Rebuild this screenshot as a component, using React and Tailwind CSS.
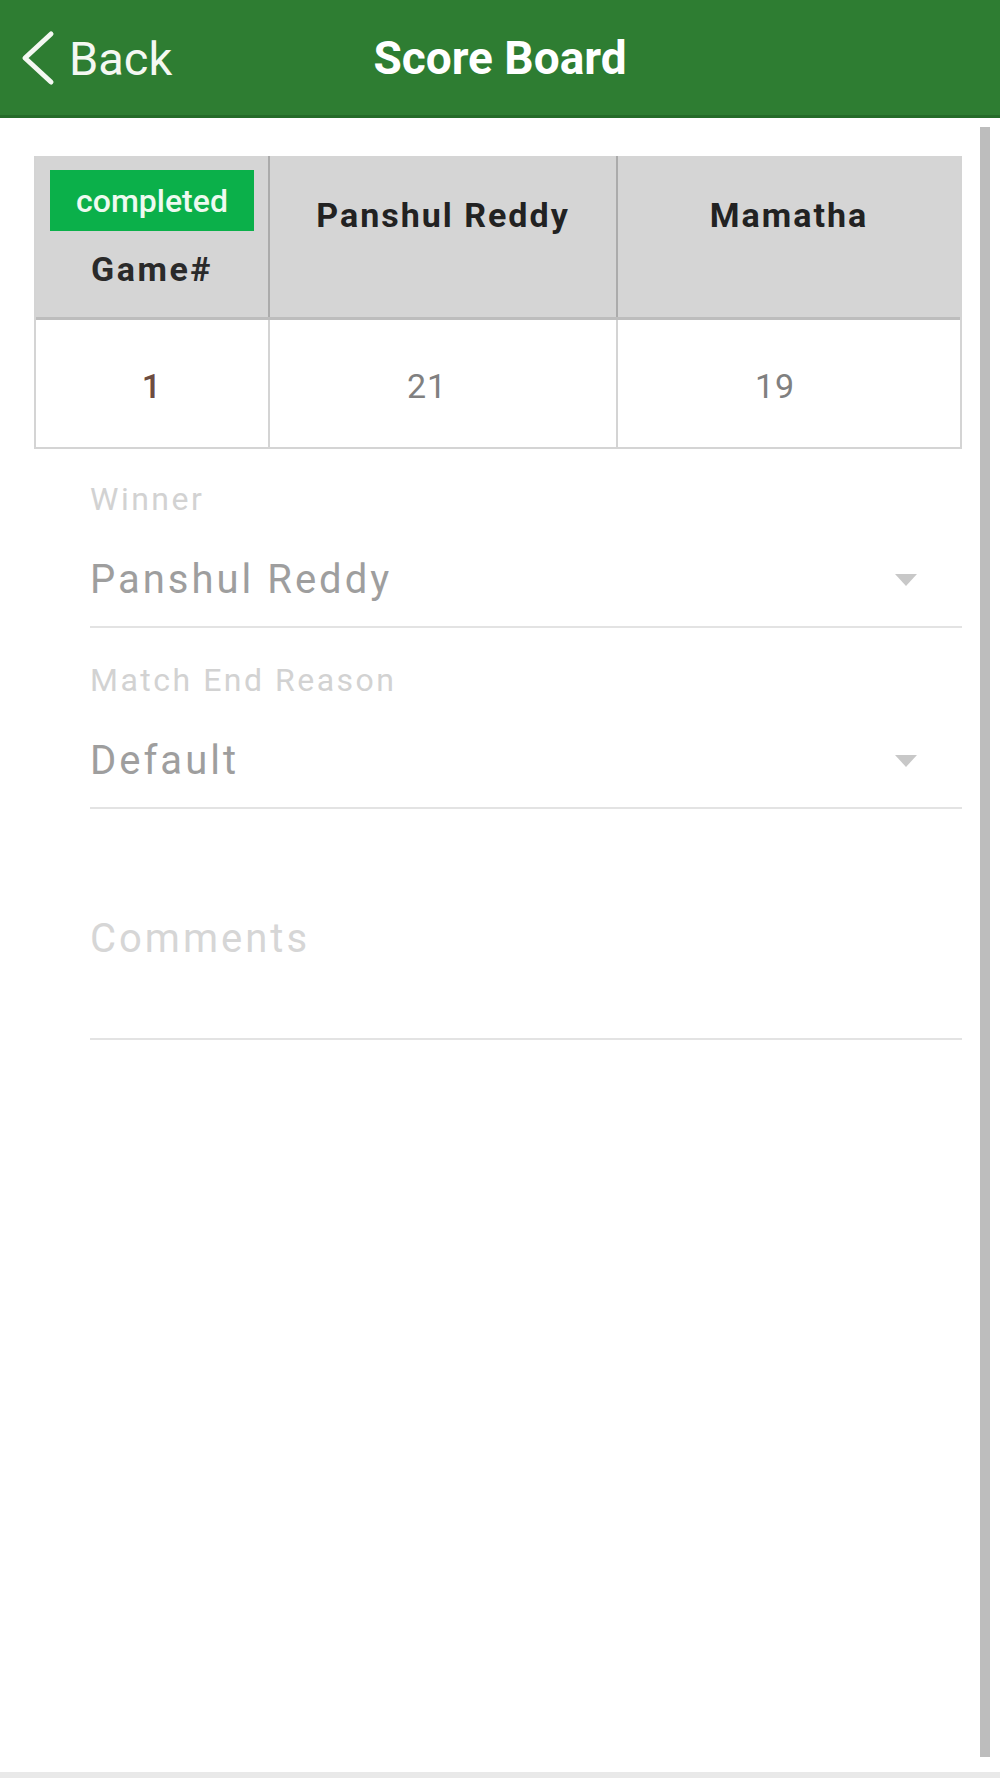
import React from 'react';

const Chevron = () => (
    <svg width="34" height="58" viewBox="0 0 34 58" className="shrink-0">
        <polyline points="30,4 4,28 30,52" fill="none" stroke="#f4f8f2" strokeWidth="5" strokeLinecap="round" strokeLinejoin="round" />
    </svg>
);

const Caret = () => (
    <svg width="22" height="12" viewBox="0 0 22 12" className="shrink-0">
        <polygon points="0,0 22,0 11,12" fill="#c8c8c8" />
    </svg>
);

const SelectField = ({ label, value, className }) => (
    <div className={className}>
        <div className="text-[32px] leading-[36px] text-[#d2d2d2] tracking-[2.5px]">{label}</div>
        <div className="flex items-center justify-between mt-[39px] pb-[22px] border-b-2 border-[#e3e3e3] pr-[45px]">
            <span className="text-[40px] leading-[48px] text-[#9e9e9e] tracking-[3px]">{value}</span>
            <Caret />
        </div>
    </div>
);

const App = () => {
    return (
        <div className="w-[1000px] h-[1778px] flex flex-col bg-white" style={{ fontFamily: 'Roboto, "Liberation Sans", sans-serif' }}>
            <header className="h-[118px] shrink-0 bg-[#2e7d32] border-b-[3px] border-[#256b29] grid grid-cols-[1fr_auto_1fr] items-center">
                <div className="flex items-center gap-[14px] pl-[21px] pt-[2px]">
                    <Chevron />
                    <span className="text-[47px] leading-none text-[#f4f8f2]">Back</span>
                </div>
                <h1 className="text-[46px] font-bold leading-none text-white">Score Board</h1>
                <div />
            </header>

            <div className="flex-1 flex pl-[34px] pr-[10px]">
                <div className="flex-1 pt-[38px]">
                    <div className="border-x-2 border-b-2 border-[#d4d4d4]">
                        <div className="grid grid-cols-[234px_348px_1fr] h-[164px] bg-[#d5d5d5] border-b-[3px] border-[#bdbdbd]">
                            <div className="flex flex-col items-center px-[14px] pt-[14px] border-r-2 border-[#ababab]">
                                <div className="w-full h-[61px] bg-[#0bb04a] flex items-center justify-center text-[32px] font-medium text-[#eefaf0]">completed</div>
                                <div className="mt-[18px] text-[34px] leading-[40px] font-bold text-[#2a2a2a] tracking-[2.5px]">Game#</div>
                            </div>
                            <div className="pt-[39px] text-center text-[34px] leading-[40px] font-bold text-[#222] tracking-[2px] border-r-2 border-[#ababab]">Panshul Reddy</div>
                            <div className="pt-[39px] text-center text-[34px] leading-[40px] font-bold text-[#222] tracking-[2px]">Mamatha</div>
                        </div>
                        <div className="grid grid-cols-[234px_348px_1fr] h-[127px] text-[34px] tracking-[1px]">
                            <div className="flex items-center justify-center pt-[6px] border-r-2 border-[#d4d4d4] text-[#6d4c41] font-medium">1</div>
                            <div className="flex items-center justify-center pt-[6px] pr-[32px] border-r-2 border-[#d4d4d4] text-[#808080]">21</div>
                            <div className="flex items-center justify-center pt-[6px] pr-[28px] text-[#808080]">19</div>
                        </div>
                    </div>

                    <div className="ml-[56px]">
                        <SelectField className="mt-[32px]" label="Winner" value="Panshul Reddy" />
                        <SelectField className="mt-[34px]" label="Match End Reason" value="Default" />
                        <div className="mt-[106px] pb-[75px] border-b-2 border-[#e3e3e3]">
                            <span className="text-[40px] leading-[48px] text-[#d6d6d6] tracking-[3px]">Comments</span>
                        </div>
                    </div>
                </div>
                <div className="w-[10px] ml-[18px] mt-[9px] mb-[15px] bg-[#bdbdbd]" />
            </div>

            <div className="h-[6px] shrink-0 bg-[#e9e9e9]" />
        </div>
    );
};

export default App;
